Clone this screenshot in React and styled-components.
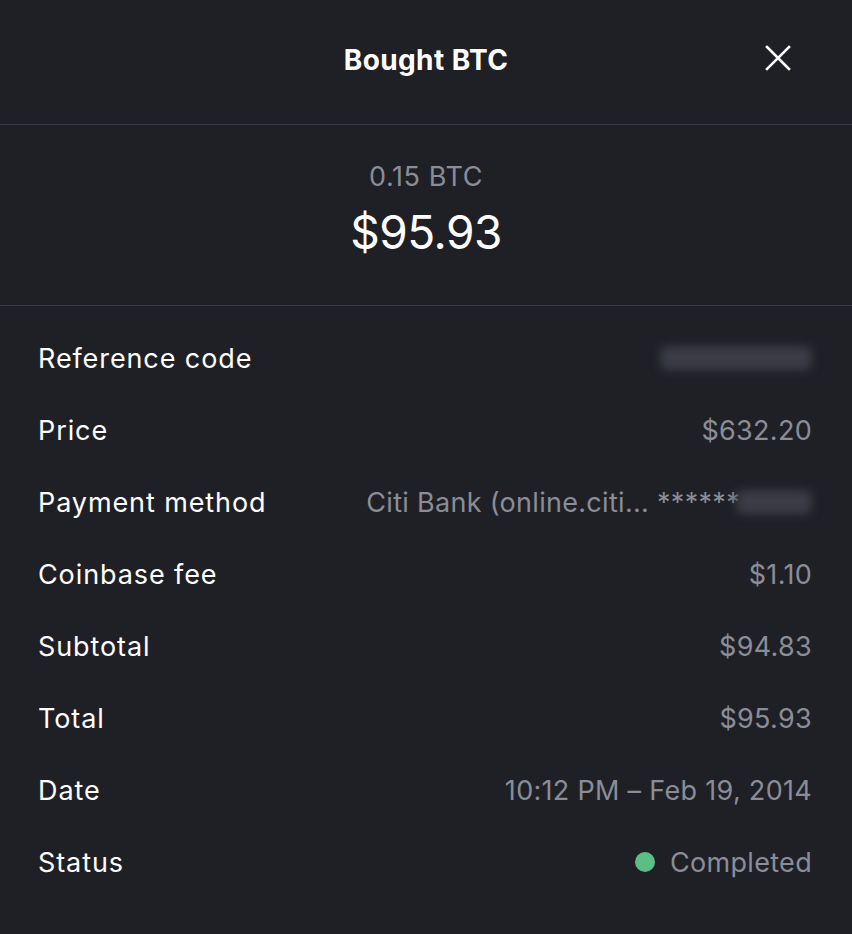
import React from "react"
import styled, { createGlobalStyle } from "styled-components"

const GlobalStyle = createGlobalStyle`
  html, body {
    margin: 0;
    padding: 0;
    background: #1f2026;
  }
  body {
    font-family: Inter, "Noto Sans", sans-serif;
    -webkit-font-smoothing: antialiased;
  }
`

const Sheet = styled.div`
  width: 852px;
  min-height: 934px;
  background: #1f2026;
  color: #ffffff;
`

const Header = styled.header`
  position: relative;
  height: 124px;
  display: flex;
  align-items: center;
  justify-content: center;
  border-bottom: 1px solid #393a44;
`

const Title = styled.h1`
  margin: 0 0 4px;
  font-size: 28px;
  font-weight: 700;
  letter-spacing: 0.4px;
`

const CloseButton = styled.button`
  position: absolute;
  right: 60px;
  top: 44px;
  width: 28px;
  height: 28px;
  padding: 0;
  border: 0;
  background: none;
  color: #fff;
  cursor: pointer;
  display: flex;
  align-items: center;
  justify-content: center;
`

const Amount = styled.section`
  height: 180px;
  display: flex;
  flex-direction: column;
  align-items: center;
  border-bottom: 1px solid #393a44;
`

const Crypto = styled.div`
  margin-top: 36px;
  font-size: 27px;
  line-height: 32px;
  letter-spacing: 0.6px;
  color: #8a8d98;
`

const Fiat = styled.div`
  margin-top: 13px;
  font-size: 46px;
  line-height: 52px;
  letter-spacing: -0.5px;
`

const Details = styled.div`
  padding: 16px 40px 0 38px;
`

const Row = styled.div`
  height: 72px;
  display: flex;
  align-items: center;
  justify-content: space-between;
  font-size: 27px;
`

const Label = styled.span`
  color: #ffffff;
  letter-spacing: 0.9px;
  white-space: nowrap;
`

const Value = styled.span`
  display: flex;
  align-items: center;
  gap: 15px;
  color: #8a8d98;
  letter-spacing: 0.3px;
  white-space: nowrap;
`

const Blur = styled.span`
  display: inline-block;
  width: ${p => p.w}px;
  height: 24px;
  margin-left: ${p => p.offset || 0}px;
  border-radius: 8px;
  background: #3b3c46;
  filter: blur(5px);
`

const Masked = styled.span`
  display: inline-flex;
  align-items: center;
`

const Dot = styled.span`
  width: 20px;
  height: 20px;
  border-radius: 50%;
  background: #5cbd87;
`

const rows = [
  { label: "Reference code", value: <Blur w={152} /> },
  { label: "Price", value: "$632.20" },
  {
    label: "Payment method",
    value: (
      <Masked>
        Citi Bank (online.citi... ******<Blur w={76} offset={-4} />
      </Masked>
    ),
  },
  { label: "Coinbase fee", value: "$1.10" },
  { label: "Subtotal", value: "$94.83" },
  { label: "Total", value: "$95.93" },
  { label: "Date", value: "10:12 PM – Feb 19, 2014" },
  {
    label: "Status",
    value: (
      <>
        <Dot />
        Completed
      </>
    ),
  },
]

export default function App() {
  return (
    <Sheet>
      <GlobalStyle />
      <Header>
        <Title>Bought BTC</Title>
        <CloseButton aria-label="Close">
          <svg width="28" height="28" viewBox="0 0 28 28" fill="none" stroke="currentColor" strokeWidth="2.6" strokeLinecap="square">
            <path d="M3 3 L25 25 M25 3 L3 25" />
          </svg>
        </CloseButton>
      </Header>
      <Amount>
        <Crypto>0.15 BTC</Crypto>
        <Fiat>$95.93</Fiat>
      </Amount>
      <Details>
        {rows.map(r => (
          <Row key={r.label}>
            <Label>{r.label}</Label>
            <Value>{r.value}</Value>
          </Row>
        ))}
      </Details>
    </Sheet>
  )
}
